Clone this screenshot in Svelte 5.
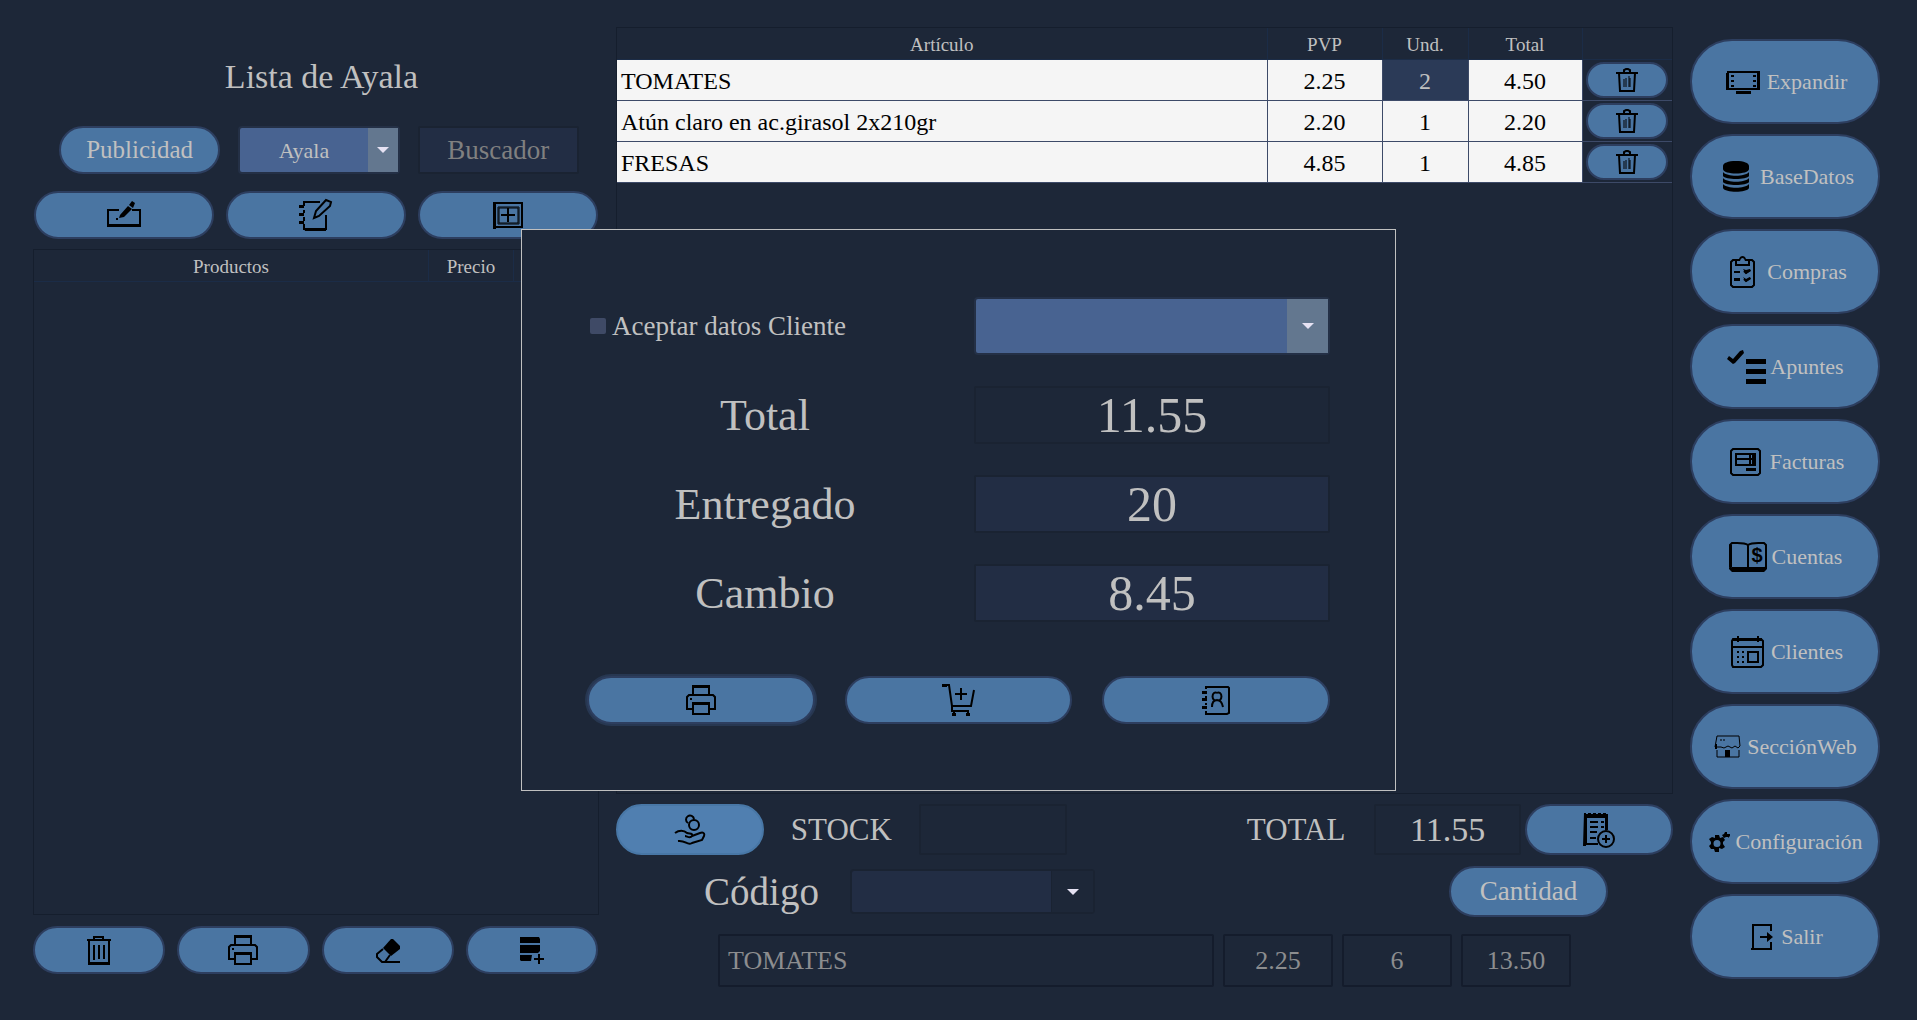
<script lang="ts">
  type Icon = { w: number; h: number; line?: string; solid?: string; thin?: string; sign?: string };

  const icons: Record<string, Icon> = {
    editBox: {
      w: 36, h: 30,
      line: 'M13 10H2V26H34V10H26M2 25H34',
      solid: 'M14 15L22 6L26 9L18 17L13 18ZM23 5L26 1L29 3L27 8ZM10 18h2v2h-2z'
    },
    notebook: {
      w: 36, h: 34,
      line: 'M22 4H6V8M6 12V15M6 19V23M6 26V31H28V17M1 9H6M1 17H6M1 25H6M16 20L18 13L28 2L33 4L32 8L21 18Z',
      solid: 'M1 7H6V10H1ZM1 15H6V18H1ZM1 23H6V26H1ZM6 30H28V33H7Z'
    },
    addBox: {
      w: 32, h: 28,
      line: 'M2 2H30V26H2ZM16 7V21M9 14H23',
      thin: 'M6 6H27V23H6ZM7 7H26V22H7Z',
      solid: 'M1 1H4V28H1Z'
    },
    trashSmall: {
      w: 24, h: 26,
      line: 'M1 6H23M9 5V3L11 2H13L15 3V5M4 6L5 24H19L20 6',
      thin: 'M9 12V20M11 11V20M14 9V20M15 11V20'
    },
    trash: {
      w: 26, h: 31,
      line: 'M1 5H25M8 4V2H17V4M3 6V29H23V6M8 10V25M13 10V24M18 10V24',
      solid: 'M3 27H23V30H3Z'
    },
    printer: {
      w: 32, h: 32,
      line: 'M8 10V2H24V10M7 25H2V13L4 11H28L30 13V25H25M8 19H24V30H8Z',
      solid: 'M5 14h2v2h-2zM7 1H25V4H7ZM7 18H25V21H7Z'
    },
    eraser: {
      w: 28, h: 26,
      line: 'M9 12L3 17V20L8 25H11L16 18M11 25H26',
      solid: 'M9 11L17 2H19L26 9V12L17 19Z'
    },
    dbPlus: {
      w: 26, h: 28,
      line: 'M20 18V28M15 23H25',
      solid: 'M1 1H20L21 3V7H1ZM1 9H21V15L19 17H1ZM1 19H13L12 25H2L1 24Z'
    },
    cart: {
      w: 34, h: 34,
      line: 'M1 2H8L11 23H30L33 7M11 22V28H28M13 28V31M27 28V31M20 5V17M14 11H26',
      solid: 'M1 1H6V4H1ZM11 30h4v3h-4zM25 30h4v3h-4z'
    },
    contacts: {
      w: 30, h: 30,
      line: 'M5 4V2H27L28 3V28L26 29H5V26M5 11V13M5 18V20M1 7H6M1 15H6M1 22H6M11 22C11 17 13 15 16 15C19 15 21 17 22 22M16 8A3 4 0 1 0 16 15A3 4 0 1 0 16 8',
      solid: 'M1 6H6V9H1ZM1 13H6V16H1ZM1 21H6V24H1Z'
    },
    money: {
      w: 32, h: 32,
      line: 'M20 6A5 5 0 1 0 20 16A5 5 0 1 0 20 6M14 9A4 4 0 1 1 20 5M1 19C5 16 10 16 13 19C16 20 19 19 18 22C16 25 13 22 11 22M18 22L26 19C29 18 31 19 30 22L28 26L18 29C13 32 12 26 4 27'
    },
    receipt: {
      w: 34, h: 38,
      line: 'M16 33H4V4H25V18M8 11H16M19 11H22M8 16H16M19 16H22M8 21H15M8 27H14M24 20A8 8 0 1 0 24 36A8 8 0 1 0 24 20M24 24V32M20 28H28',
      solid: 'M2 2h2v2h2v-2h3v2h2v-2h3v2h2v-2h3v2h2v-2h3v2h2v15h-3v-12h-19v28h-3z'
    },
    screen: {
      w: 40, h: 26,
      line: 'M5 3H36V20H5Z',
      solid: 'M3 2H37V4H3ZM3 2H6V21H3ZM34 2H37V21H34ZM13 22H28V25H13ZM8 6h3v2h-3zM8 11h3v2h-3zM8 16h3v2h-3zM30 6h3v2h-3zM30 11h3v2h-3zM30 16h3v2h-3z'
    },
    database: {
      w: 40, h: 34,
      solid: 'M20 1C12 1 7 3 7 6V9C7 15 33 15 33 9V6C33 3 28 1 20 1ZM7 12C11 17 29 17 33 12V16C31 20 9 20 7 16ZM7 18C11 23 29 23 33 18V22C31 26 9 26 7 22ZM7 24C11 29 29 29 33 24V28C31 33 9 33 7 28Z'
    },
    clipboard: {
      w: 40, h: 34,
      line: 'M13 5H10L8 7V30L10 32H29L31 30V7L29 5H26M13 4V10H26V4M11 17H17M11 24H17M21 16L23 18L27 15M21 24L23 26L27 23',
      solid: 'M13 4H16C17 0 22 0 23 4H26V6H22C21 2 18 2 17 6H13ZM20 14L23 15L27 14L28 16L23 19ZM20 22L23 24L27 22L28 24L23 27ZM11 23H17V26H11Z'
    },
    checklist: {
      w: 40, h: 36,
      solid: 'M1 10L3 7L7 10L14 2L17 1L18 4L9 14L7 15ZM20 10H40V15H20ZM20 20H40V25H20ZM20 30H40V35H20Z'
    },
    invoice: {
      w: 40, h: 30,
      line: 'M7 2H32L34 4V26L32 28H7L5 26V4ZM10 7H29V18H10ZM10 12H29M24 7V18M27 7V18',
      solid: 'M20 21H30V24H20Z'
    },
    ledger: {
      w: 40, h: 32,
      line: 'M20 4C16 1 8 2 4 2L2 4V26L5 29H35L38 26V4L36 2C30 2 24 1 20 4V28',
      solid: 'M1 26H39V28L36 31H4L1 28ZM1 4H4V27H1Z',
      sign: '$'
    },
    calendar: {
      w: 40, h: 34,
      line: 'M6 4H34L36 6V30L34 32H6L5 30V6ZM5 12H36M11 1V7M31 1V7M21 17H31V27H21Z',
      solid: 'M6 3H35V6H6ZM10 16h2v2h-2zM15 16h2v2h-2zM10 21h2v2h-2zM15 21h2v2h-2zM10 26h2v2h-2zM15 26h2v2h-2z'
    },
    store: {
      w: 30, h: 24,
      thin: 'M4 1H26L27 11L25 13L22 11L19 13L15 11L11 13L8 12H2L4 1M4 15V22H26V15M7 5H9M10 5H12',
      solid: 'M12 15H17V22H12ZM2 9H4V14H2Z'
    },
    gears: {
      w: 24, h: 22,
      solid: 'M8 4H12L13 7L16 6L18 9L16 11V13L18 16L15 18L12 17V21H8L7 18L4 18L2 15L4 13V11L2 8L5 6L8 7ZM10 9A3 3 0 1 0 10 16A3 3 0 1 0 10 9ZM15 4L17 3L18 1H20V3L23 3V5L21 7V6H19L17 7Z'
    },
    exit: {
      w: 30, h: 28,
      line: 'M24 8V2H6V26H24V19M13 14H23',
      solid: 'M20 9L26 14L20 19ZM4 25H25V27H4Z'
    }
  };

  const menu = [
    { icon: 'screen', label: 'Expandir' },
    { icon: 'database', label: 'BaseDatos' },
    { icon: 'clipboard', label: 'Compras' },
    { icon: 'checklist', label: 'Apuntes' },
    { icon: 'invoice', label: 'Facturas' },
    { icon: 'ledger', label: 'Cuentas' },
    { icon: 'calendar', label: 'Clientes' },
    { icon: 'store', label: 'SecciónWeb' },
    { icon: 'gears', label: 'Configuración' },
    { icon: 'exit', label: 'Salir' }
  ];

  const articles = [
    { name: 'TOMATES', price: 2.25, units: 2 },
    { name: 'Atún claro en ac.girasol 2x210gr', price: 2.2, units: 1 },
    { name: 'FRESAS', price: 4.85, units: 1 }
  ];

  let selectedRow = $state(0);
  let search = $state('');
  let paid = $state('20');
  let acceptClient = $state(false);

  const total = $derived(articles.reduce((sum, a) => sum + a.price * a.units, 0));
  const change = $derived(Number(paid) - total);
</script>

{#snippet glyph(name: string)}
  {@const icon = icons[name]}
  <svg width={icon.w} height={icon.h} viewBox="0 0 {icon.w} {icon.h}" aria-hidden="true">
    {#if icon.line}<path class="line" d={icon.line} />{/if}
    {#if icon.thin}<path class="thin" d={icon.thin} />{/if}
    {#if icon.solid}<path fill-rule="evenodd" d={icon.solid} />{/if}
    {#if icon.sign}<text x="29" y="21" text-anchor="middle">{icon.sign}</text>{/if}
  </svg>
{/snippet}

<div class="app">
  <section class="list">
    <h1>Lista de Ayala</h1>

    <div class="filters">
      <button class="pill">Publicidad</button>
      <div class="combo accent">
        <select aria-label="Lista">
          <option>Ayala</option>
        </select>
      </div>
      <input class="field" type="text" placeholder="Buscador" aria-label="Buscador" bind:value={search} />
    </div>

    <div class="tools three">
      <button class="pill" aria-label="Editar lista">{@render glyph('editBox')}</button>
      <button class="pill" aria-label="Editar notas">{@render glyph('notebook')}</button>
      <button class="pill" aria-label="Añadir">{@render glyph('addBox')}</button>
    </div>

    <div class="sheet products">
      <table>
        <thead>
          <tr><th>Productos</th><th class="price">Precio</th><th class="price"></th></tr>
        </thead>
      </table>
    </div>

    <div class="tools four">
      <button class="pill" aria-label="Borrar">{@render glyph('trash')}</button>
      <button class="pill" aria-label="Imprimir">{@render glyph('printer')}</button>
      <button class="pill" aria-label="Limpiar">{@render glyph('eraser')}</button>
      <button class="pill" aria-label="Guardar en base de datos">{@render glyph('dbPlus')}</button>
    </div>
  </section>

  <main class="ticket">
    <div class="sheet">
      <table class="articles">
        <colgroup>
          <col />
          <col class="c-price" />
          <col class="c-units" />
          <col class="c-total" />
          <col class="c-delete" />
        </colgroup>
        <thead>
          <tr><th>Artículo</th><th>PVP</th><th>Und.</th><th>Total</th><th></th></tr>
        </thead>
        <tbody>
          {#each articles as article, i}
            <tr>
              <td class="name">{article.name}</td>
              <td>{article.price.toFixed(2)}</td>
              <td class:selected={i === selectedRow} onclick={() => (selectedRow = i)}>{article.units}</td>
              <td>{(article.price * article.units).toFixed(2)}</td>
              <td class="delete">
                <button class="pill" aria-label="Eliminar {article.name}">{@render glyph('trashSmall')}</button>
              </td>
            </tr>
          {/each}
        </tbody>
      </table>
    </div>

    <div class="summary">
      <button class="pill active" aria-label="Cobrar">{@render glyph('money')}</button>
      <label for="stock">STOCK</label>
      <input id="stock" class="field plain" type="text" readonly />
      <label class="total" for="total">TOTAL</label>
      <input id="total" class="field plain" type="text" readonly value={total.toFixed(2)} />
      <button class="pill" aria-label="Nuevo ticket">{@render glyph('receipt')}</button>
    </div>

    <div class="code">
      <label for="code">Código</label>
      <div class="combo">
        <select id="code"><option></option></select>
      </div>
      <button class="pill">Cantidad</button>
    </div>

    <div class="current">
      <input class="field plain name" type="text" aria-label="Artículo" disabled value="TOMATES" />
      <input class="field plain" type="text" aria-label="Precio" disabled value="2.25" />
      <input class="field plain" type="text" aria-label="Cantidad" disabled value="6" />
      <input class="field plain" type="text" aria-label="Importe" disabled value="13.50" />
    </div>
  </main>

  <nav class="menu">
    {#each menu as item}
      <button class="pill">{@render glyph(item.icon)}<span>{item.label}</span></button>
    {/each}
  </nav>

  <div class="overlay">
    <div class="payment" role="dialog" aria-label="Cobro">
      <div class="form">
        <label class="check">
          <input type="checkbox" bind:checked={acceptClient} />
          Aceptar datos Cliente
        </label>
        <div class="combo accent">
          <select aria-label="Cliente"><option></option></select>
        </div>
        <label for="pay-total">Total</label>
        <input id="pay-total" class="field plain" type="text" readonly value={total.toFixed(2)} />
        <label for="pay-given">Entregado</label>
        <input id="pay-given" class="field" type="text" bind:value={paid} />
        <label for="pay-change">Cambio</label>
        <input id="pay-change" class="field" type="text" readonly value={change.toFixed(2)} />
      </div>
      <div class="actions">
        <button class="pill focused" aria-label="Imprimir ticket">{@render glyph('printer')}</button>
        <button class="pill" aria-label="Añadir a la compra">{@render glyph('cart')}</button>
        <button class="pill" aria-label="Agenda">{@render glyph('contacts')}</button>
      </div>
    </div>
  </div>
</div>

<style>
  :global(body) {
    margin: 0;
    background: #1d2738;
  }

  .app {
    position: relative;
    display: grid;
    grid-template-columns: minmax(0, 566fr) minmax(0, 1057fr) 190px;
    gap: 17px;
    box-sizing: border-box;
    min-height: 100vh;
    padding: 27px 37px 33px 33px;
    background: #1d2738;
    color: #c0c0c0;
    font-family: Georgia, 'Liberation Serif', serif;
    font-size: 25px;
  }

  button,
  input,
  select {
    box-sizing: border-box;
    min-width: 0;
    margin: 0;
    font: inherit;
    color: inherit;
  }

  svg {
    flex: none;
    display: block;
    fill: #000;
  }

  svg text {
    font: bold 20px 'Liberation Sans', sans-serif;
  }

  .line,
  .thin {
    fill: none;
    stroke: #000;
    stroke-width: 2;
  }

  .thin {
    stroke-width: 1;
  }

  .pill {
    display: flex;
    align-items: center;
    justify-content: center;
    height: 48px;
    padding: 0;
    border: 2px solid #2d3e5f;
    border-radius: 24px;
    background: #4a75a2;
  }

  .field {
    width: 100%;
    padding: 0 8px;
    border: 2px solid #1a2332;
    border-radius: 2px;
    background: #222d44;
    text-align: center;
    outline: none;
  }

  .field.plain {
    background: #1d2738;
  }

  .field::placeholder {
    color: #808080;
    opacity: 1;
  }

  .combo {
    position: relative;
    display: flex;
    border: 2px solid #1a2332;
    border-radius: 4px;
    box-sizing: border-box;
    background: #222d44;
  }

  .combo select {
    flex: 1;
    appearance: none;
    padding: 0 42px 0 0;
    border: 0;
    background: linear-gradient(#1a2332, #1a2332) right 41px top / 1px 100% no-repeat,
      linear-gradient(#1d2738, #1d2738) right top / 41px 100% no-repeat;
    text-align-last: center;
    outline: none;
  }

  .combo.accent {
    border-color: #243046;
    background: #486391;
  }

  .combo.accent select {
    background: linear-gradient(#63778f, #63778f) right top / 41px 100% no-repeat;
  }

  .combo::after {
    content: '';
    position: absolute;
    top: calc(50% - 3px);
    right: 14px;
    border: 6px solid transparent;
    border-top-color: #e6e2f3;
    border-bottom-width: 0;
    pointer-events: none;
  }

  /* product list */
  .list {
    display: flex;
    flex-direction: column;
    padding-bottom: 13px;
  }

  h1 {
    display: flex;
    align-items: center;
    justify-content: center;
    height: 99px;
    margin: 0;
    padding: 0 16px 0 27px;
    font-size: 34px;
    line-height: 36px;
    font-weight: 400;
    box-sizing: border-box;
  }

  .filters {
    display: grid;
    grid-template-columns: repeat(3, 1fr);
    gap: 18px;
    height: 48px;
    padding: 0 20px 0 26px;
    margin-bottom: 17px;
  }

  .filters .combo {
    font-size: 22px;
  }

  .filters .combo select {
    padding-right: 30px;
    background-size: 30px 100%;
  }

  .filters .combo::after {
    right: 9px;
  }

  .filters .field {
    font-size: 27px;
  }

  .tools {
    display: grid;
    gap: 12px;
  }

  .three {
    grid-template-columns: repeat(3, 1fr);
    padding: 0 1px;
    margin-bottom: 10px;
  }

  .four {
    grid-template-columns: repeat(4, 1fr);
    margin-top: 11px;
    padding-right: 1px;
  }

  .sheet {
    flex: 1;
    border: 1px solid #151e2d;
  }

  table {
    width: 100%;
    table-layout: fixed;
    border-collapse: collapse;
  }

  th {
    height: 29px;
    padding: 2px 0 0;
    border: 1px solid #1b2c47;
    border-width: 0 0 1px 1px;
    font-size: 19px;
    line-height: 22px;
    font-weight: 400;
  }

  th:first-child {
    border-left: 0;
  }

  .price {
    width: 84px;
  }

  /* ticket */
  .ticket {
    display: flex;
    flex-direction: column;
  }

  .c-price {
    width: 115px;
  }

  .c-units {
    width: 86px;
  }

  .c-total {
    width: 114px;
  }

  .c-delete {
    width: 90px;
  }

  td {
    height: 38px;
    padding: 2px 0 0;
    border: 1px solid #3d4a68;
    border-width: 0 1px 1px 1px;
    background: #f5f5f5;
    color: #000;
    font-size: 24px;
    line-height: 28px;
    text-align: center;
  }

  td.name {
    padding-left: 4px;
    border-left: 0;
    text-align: left;
  }

  td.selected {
    background: #2b3a57;
    color: #c0c0c0;
  }

  td.delete {
    height: 40px;
    padding: 0 4px 0 3px;
    border-right: 0;
    background: none;
  }

  td .pill {
    width: 100%;
    height: 36px;
    border-radius: 18px;
  }

  .summary {
    display: grid;
    grid-template-columns: repeat(7, 1fr);
    gap: 4px;
    height: 51px;
    margin-top: 10px;
    font-size: 31px;
    text-align: center;
  }

  .summary label,
  .code label {
    align-self: center;
  }

  .summary .pill {
    height: 51px;
    border-radius: 26px;
  }

  .summary .active {
    border-color: #4877a6;
    background: #507fb0;
  }

  .summary .total {
    grid-column: 5;
  }

  .summary .field {
    font-size: 34px;
  }

  .code {
    display: flex;
    align-items: center;
    height: 51px;
    margin-top: 11px;
    padding: 0 65px 0 57px;
  }

  .code label {
    width: 177px;
    font-size: 39px;
    line-height: 44px;
    text-align: center;
  }

  .code .combo {
    width: 245px;
    height: 45px;
  }

  .code .pill {
    width: 159px;
    height: 51px;
    margin-left: auto;
    border-radius: 26px;
    font-size: 27px;
  }

  .current {
    display: grid;
    grid-template-columns: minmax(0, 1fr) 110px 110px 110px;
    gap: 9px;
    height: 53px;
    margin-top: 17px;
    padding: 0 102px;
    font-size: 26px;
  }

  .current .field {
    border-color: #141c2c;
    color: #8c8d8f;
  }

  .current .name {
    text-align: left;
  }

  /* side menu */
  .menu {
    display: flex;
    flex-direction: column;
    gap: 10px;
    padding: 12px 0 8px;
  }

  .menu .pill {
    flex: 1;
    gap: 4px;
    min-height: 60px;
    border-radius: 42px;
    font-size: 22px;
  }

  /* payment dialog */
  .overlay {
    position: absolute;
    inset: 0;
    display: grid;
    place-items: center;
    pointer-events: none;
  }

  .payment {
    box-sizing: border-box;
    width: 875px;
    max-width: 100%;
    padding: 67px 65px 66px;
    border: 1px solid #c0c0c0;
    background: #1d2738;
    pointer-events: auto;
  }

  .form {
    display: grid;
    grid-template-columns: repeat(2, minmax(0, 1fr));
    grid-auto-rows: 58px;
    gap: 31px;
    align-items: center;
    text-align: center;
    font-size: 44px;
  }

  .form .combo,
  .form .field {
    height: 58px;
  }

  .form .field {
    font-size: 50px;
  }

  .form .check {
    display: flex;
    align-items: center;
    gap: 6px;
    padding-left: 3px;
    font-size: 27px;
    white-space: nowrap;
  }

  .check input {
    appearance: none;
    width: 16px;
    height: 16px;
    border-radius: 2px;
    background: #3f4a66;
  }

  .check input:checked {
    background: #4a75a2;
  }

  .actions {
    display: grid;
    grid-template-columns: repeat(3, 1fr);
    gap: 30px;
    margin-top: 54px;
  }

  .focused {
    box-shadow: 0 0 0 2px #273751;
  }
</style>
